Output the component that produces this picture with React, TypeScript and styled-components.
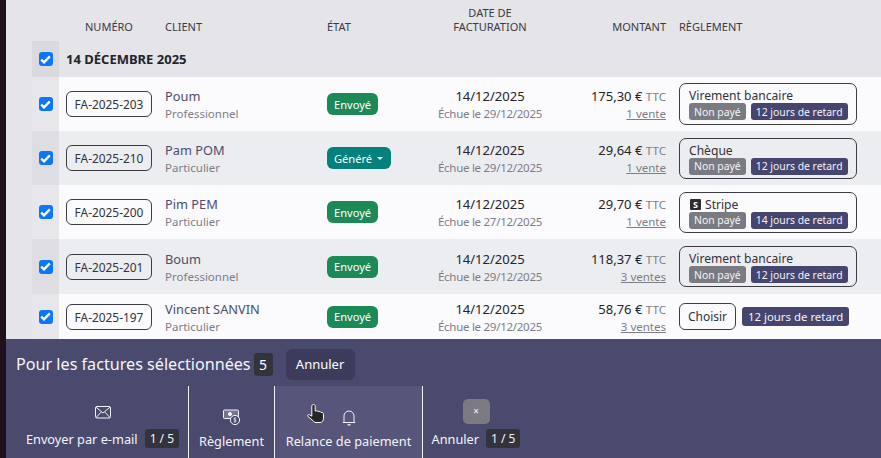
import React from "react";
import styled, { createGlobalStyle } from "styled-components";

const Global = createGlobalStyle`
  html, body { margin: 0; padding: 0; width: 881px; height: 458px; overflow: hidden; background: #e4e4e9; }
  body { font-family: "Noto Sans", "Open Sans", sans-serif; color: #2b2b33; }
  * { box-sizing: border-box; }
`;

const Page = styled.div`
  position: relative;
  width: 881px;
  height: 458px;
  display: flex;
  overflow: hidden;
`;
const Strip = styled.div`
  width: 6px;
  flex: none;
  background: #1f111b;
`;
const Main = styled.div`
  flex: 1;
  display: flex;
  flex-direction: column;
  min-width: 0;
`;
const Table = styled.div`
  padding-left: 26px;
  height: 339px;
  flex: none;
  background: #e4e4e9;
`;
const cols = `27px 106px 162px 110px 106px 123px 1fr`;
const HeadRow = styled.div`
  display: grid;
  grid-template-columns: ${cols};
  height: 41px;
  font-size: 11px;
  line-height: 14px;
  color: #3a3a44;
  text-transform: uppercase;
  align-items: start;
`;
const Head = styled.div<{ $align?: string; $pad?: number }>`
  padding-top: 20px;
  text-align: ${(p) => p.$align || "left"};
  padding-left: ${(p) => p.$pad || 0}px;
  white-space: nowrap;
`;
const DateHead = styled(Head)`
  padding-top: 6px;
`;
const GroupRow = styled.div`
  display: grid;
  grid-template-columns: 27px 1fr;
  height: 36px;
  align-items: stretch;
`;
const CheckCell = styled.div<{ $tone: string }>`
  background: ${(p) => p.$tone};
  display: flex;
  align-items: center;
  justify-content: center;
  align-self: stretch;
`;
const CheckBox = styled.span`
  width: 14px;
  height: 14px;
  border-radius: 3px;
  background: #0b76f7;
  display: flex;
  align-items: center;
  justify-content: center;
`;
const GroupTitle = styled.div`
  font-weight: 700;
  font-size: 13px;
  color: #23232b;
  display: flex;
  align-items: center;
  padding-left: 7px;
`;
const Row = styled.div<{ $alt: boolean; $h: number }>`
  display: grid;
  grid-template-columns: ${cols};
  height: ${(p) => p.$h}px;
  background: ${(p) => (p.$alt ? "#ecedf1" : "#fbfbfd")};
  align-items: center;
`;
const NumCell = styled.div`
  padding-left: 7px;
`;
const NumPill = styled.div`
  width: 86px;
  height: 26px;
  border: 1px solid #3c3c44;
  border-radius: 6px;
  display: flex;
  align-items: center;
  justify-content: center;
  font-size: 11.9px;
  color: #33333b;
  white-space: nowrap;
`;
const TextBlock = styled.div`
  padding-top: 2px;
`;
const ClientName = styled.div`
  font-size: 12.8px;
  line-height: 17px;
  color: #4d4c70;
  white-space: nowrap;
`;
const Sub = styled.div`
  font-size: 11.5px;
  line-height: 17px;
  color: #7d7d87;
  white-space: nowrap;
`;
const DueText = styled(Sub)`
  letter-spacing: -0.27px;
`;
const Status = styled.div<{ $bg: string }>`
  display: inline-flex;
  align-items: center;
  height: 22px;
  padding: 0 7px;
  border-radius: 6px;
  background: ${(p) => p.$bg};
  color: #fff;
  font-size: 11.1px;
  white-space: nowrap;
  gap: 5px;
  vertical-align: top;
`;
const Caret = styled.span`
  width: 0;
  height: 0;
  margin-right: 1px;
  border-left: 3px solid transparent;
  border-right: 3px solid transparent;
  border-top: 3px solid #fff;
`;
const DateCell = styled(TextBlock)`
  text-align: center;
`;
const DateText = styled.div`
  font-size: 13px;
  line-height: 17px;
  color: #23232b;
`;
const Amount = styled(TextBlock)`
  text-align: right;
`;
const Sum = styled.div`
  font-size: 13px;
  line-height: 17px;
  color: #23232b;
  white-space: nowrap;
`;
const Ttc = styled.span`
  font-size: 11.6px;
  color: #7d7d87;
`;
const Sales = styled.a`
  font-size: 11.5px;
  line-height: 17px;
  color: #7d7d87;
  text-decoration: underline;
  display: block;
`;
const PayCell = styled.div`
  padding-left: 13px;
  display: flex;
  align-items: center;
  gap: 6px;
`;
const PayBox = styled.div<{ $h: number }>`
  width: 178px;
  height: ${(p) => p.$h}px;
  border: 1px solid #3c3c44;
  border-radius: 7px;
  padding: 5px 8px 0 9px;
`;
const PayName = styled.div`
  display: flex;
  align-items: center;
  gap: 4px;
  font-size: 12.1px;
  line-height: 14px;
  color: #33333b;
  white-space: nowrap;
`;
const Badges = styled.div`
  display: flex;
  gap: 5px;
`;
const Tag = styled.span<{ $bg: string }>`
  background: ${(p) => p.$bg};
  color: #f4f4f8;
  height: 17px;
  display: inline-flex;
  align-items: center;
  padding: 0 5px;
  border-radius: 3px;
  font-size: 10.4px;
  white-space: nowrap;
`;
const StripeMark = styled.span`
  width: 11px;
  height: 11px;
  border-radius: 1px;
  background: #2d2d33;
  color: #fff;
  font-size: 9px;
  font-weight: 700;
  line-height: 11px;
  text-align: center;
  margin-left: 1px;
`;
const ChooseBtn = styled.div`
  width: 57px;
  height: 27px;
  border: 1px solid #3c3c44;
  border-radius: 6px;
  display: flex;
  align-items: center;
  justify-content: center;
  font-size: 12px;
  color: #33333b;
`;
const BigTag = styled(Tag)`
  height: 19px;
  padding: 0 6px;
  font-size: 11.4px;
`;
const Bar = styled.div`
  flex: 1;
  background: #4a496e;
  color: #fff;
  display: flex;
  flex-direction: column;
`;
const BarTop = styled.div`
  height: 47px;
  display: flex;
  align-items: center;
  padding: 3px 0 0 10px;
`;
const BarTitle = styled.div`
  font-size: 16.15px;
  color: #f6f6f8;
  white-space: nowrap;
`;
const Count = styled.span`
  background: #33333d;
  border-radius: 3px;
  color: #fff;
  height: 23px;
  width: 19px;
  margin-left: 3px;
  display: flex;
  align-items: center;
  justify-content: center;
  font-size: 14px;
`;
const CancelBtn = styled.div`
  margin-left: 13px;
  width: 69px;
  height: 31px;
  border-radius: 6px;
  background: #3c3b5c;
  display: flex;
  align-items: center;
  justify-content: center;
  font-size: 13px;
`;
const Actions = styled.div`
  flex: 1;
  display: flex;
  align-items: stretch;
`;
const Action = styled.div<{ $w: number; $top: number; $left?: number; $hover?: boolean; $border?: boolean }>`
  width: ${(p) => p.$w}px;
  flex: none;
  background: ${(p) => (p.$hover ? "#57567a" : "transparent")};
  border-right: ${(p) => (p.$border ? "1px solid #f2f2f6" : "none")};
  display: flex;
  flex-direction: column;
  align-items: center;
  padding-top: ${(p) => p.$top}px;
  padding-left: ${(p) => p.$left || 0}px;
`;
const IconSlot = styled.div<{ $h: number }>`
  height: ${(p) => p.$h}px;
  display: flex;
  align-items: center;
  justify-content: center;
`;
const ActionLabel = styled.div<{ $top: number }>`
  display: flex;
  align-items: center;
  gap: 7px;
  margin-top: ${(p) => p.$top}px;
  height: 19px;
  font-size: 12.75px;
  color: #f4f4f8;
  white-space: nowrap;
`;
const Ratio = styled.span`
  background: #33333d;
  border-radius: 3px;
  height: 19px;
  padding: 0 5px;
  display: inline-flex;
  align-items: center;
  font-size: 12px;
`;
const CloseIcon = styled.div`
  width: 27px;
  height: 25px;
  border-radius: 5px;
  background: #7b7a82;
  color: #f4f4f8;
  display: flex;
  align-items: center;
  justify-content: center;
  font-size: 10px;
`;
const Cursor = styled.svg`
  position: absolute;
  left: 306px;
  top: 403px;
`;

const Tick = () => (
  <svg width="11" height="9" viewBox="0 0 11 9" fill="none">
    <path d="M1.200 4.600 4 7.400 9.800 1.400" stroke="#fff" strokeWidth="2.300" />
  </svg>
);

type Inv = {
  num: string; name: string; kind: string; gen?: boolean; due: string; sum: string; sales: string;
  pay: string; stripe?: boolean; late: string; h: number; box: number; choose?: boolean;
};
const rows: Inv[] = [
  { num: "FA-2025-203", name: "Poum", kind: "Professionnel", due: "29/12/2025", sum: "175,30 €", sales: "1 vente", pay: "Virement bancaire", late: "12 jours de retard", h: 54, box: 42 },
  { num: "FA-2025-210", name: "Pam POM", kind: "Particulier", gen: true, due: "29/12/2025", sum: "29,64 €", sales: "1 vente", pay: "Chèque", late: "12 jours de retard", h: 54, box: 41 },
  { num: "FA-2025-200", name: "Pim PEM", kind: "Particulier", due: "27/12/2025", sum: "29,70 €", sales: "1 vente", pay: "Stripe", stripe: true, late: "14 jours de retard", h: 54, box: 41 },
  { num: "FA-2025-201", name: "Boum", kind: "Professionnel", due: "29/12/2025", sum: "118,37 €", sales: "3 ventes", pay: "Virement bancaire", late: "12 jours de retard", h: 55, box: 41 },
  { num: "FA-2025-197", name: "Vincent SANVIN", kind: "Particulier", due: "29/12/2025", sum: "58,76 €", sales: "3 ventes", pay: "", choose: true, late: "12 jours de retard", h: 45, box: 0 },
];

export default function App() {
  return (
    <Page>
      <Global />
      <Strip />
      <Main>
        <Table>
          <HeadRow>
            <div />
            <Head $pad={26}>Numéro</Head>
            <Head>Client</Head>
            <Head>État</Head>
            <DateHead $align="center">Date de<br />facturation</DateHead>
            <Head $align="right">Montant</Head>
            <Head $pad={13}>Règlement</Head>
          </HeadRow>
          <GroupRow>
            <CheckCell $tone="#dadade"><CheckBox><Tick /></CheckBox></CheckCell>
            <GroupTitle>14 DÉCEMBRE 2025</GroupTitle>
          </GroupRow>
          {rows.map((r, i) => (
            <Row key={r.num} $alt={i % 2 === 1} $h={r.h}>
              <CheckCell $tone={i % 2 === 1 ? "#dedee2" : "#e7e7eb"}>
                <CheckBox><Tick /></CheckBox>
              </CheckCell>
              <NumCell><NumPill>{r.num}</NumPill></NumCell>
              <TextBlock>
                <ClientName>{r.name}</ClientName>
                <Sub>{r.kind}</Sub>
              </TextBlock>
              <div>
                {r.gen ? (
                  <Status $bg="#04807d">Généré <Caret /></Status>
                ) : (
                  <Status $bg="#1c8a57">Envoyé</Status>
                )}
              </div>
              <DateCell>
                <DateText>14/12/2025</DateText>
                <DueText>Échue le {r.due}</DueText>
              </DateCell>
              <Amount>
                <Sum>{r.sum} <Ttc>TTC</Ttc></Sum>
                <Sales>{r.sales}</Sales>
              </Amount>
              <PayCell>
                {r.choose ? (
                  <>
                    <ChooseBtn>Choisir</ChooseBtn>
                    <BigTag $bg="#45456e">{r.late}</BigTag>
                  </>
                ) : (
                  <PayBox $h={r.box}>
                    <PayName>
                      {r.stripe && <StripeMark>S</StripeMark>}
                      {r.pay}
                    </PayName>
                    <Badges>
                      <Tag $bg="#7a7a82">Non payé</Tag>
                      <Tag $bg="#45456e">{r.late}</Tag>
                    </Badges>
                  </PayBox>
                )}
              </PayCell>
            </Row>
          ))}
        </Table>
        <Bar>
          <BarTop>
            <BarTitle>Pour les factures sélectionnées</BarTitle>
            <Count>5</Count>
            <CancelBtn>Annuler</CancelBtn>
          </BarTop>
          <Actions>
            <Action $w={183} $top={14} $left={11} $border>
              <IconSlot $h={25}>
                <svg width="16" height="13" viewBox="0 0 16 13" fill="none" stroke="#f4f4f8" strokeWidth="1">
                  <rect x="0.500" y="0.500" width="15" height="11.500" rx="1.500" />
                  <path d="M1 1.200 8 7l7-5.800M1 11.600l5-5.400M15 11.600l-5-5.400" />
                </svg>
              </IconSlot>
              <ActionLabel $top={4}>Envoyer par e-mail <Ratio>1 / 5</Ratio></ActionLabel>
            </Action>
            <Action $w={86} $top={17} $border>
              <IconSlot $h={28}>
                <svg width="18" height="17" viewBox="0 0 18 17" fill="none" stroke="#f4f4f8" strokeWidth="1">
                  <rect x="0.500" y="1" width="15" height="8.500" rx="1" fill="#f4f4f8" fillOpacity="0.25" />
                  <circle cx="7" cy="5" r="1.600" fill="#f4f4f8" />
                  <circle cx="12" cy="11" r="4.600" fill="#4a496e" />
                  <path d="M13.200 9.400c-.5-.6-2.400-.7-2.400.5 0 1.200 2.500.8 2.500 2 0 1.200-2 1.100-2.600.4M12 8.400v5.200" strokeWidth="0.700" />
                </svg>
              </IconSlot>
              <ActionLabel $top={0}>Règlement</ActionLabel>
            </Action>
            <Action $w={148} $top={17} $hover $border>
              <IconSlot $h={28}>
                <svg width="14" height="17" viewBox="0 0 14 17" fill="none" stroke="#f4f4f8" strokeWidth="1">
                  <path d="M2 12.500V7a5 5 0 0 1 10 0v5.500l1 1H1z" />
                  <path d="M5.500 15.800h3" strokeWidth="1.300" />
                </svg>
              </IconSlot>
              <ActionLabel $top={0}>Relance de paiement</ActionLabel>
            </Action>
            <Action $w={106} $top={12}>
              <IconSlot $h={26}><CloseIcon>×</CloseIcon></IconSlot>
              <ActionLabel $top={5}>Annuler <Ratio>1 / 5</Ratio></ActionLabel>
            </Action>
          </Actions>
        </Bar>
      </Main>
      <Cursor width="20" height="22" viewBox="0 0 20 22">
        <path
          d="M7.500 1.500c1.100 0 1.700.8 1.700 1.800v4.700c1.400-.3 2.500-.1 3 .6 1.300-.3 2.300 0 2.800.8 1.400-.2 2.500.5 2.500 1.800v4.100c0 2.500-1.400 4.200-3.500 4.200H10c-1.500 0-2.400-.9-3.200-2L2 13.500c-.8-1 .2-2.300 1.300-1.800l2.500 1.500V3.300c0-1 .7-1.800 1.700-1.800z"
          fill="#262626" stroke="#fff" strokeWidth="1"
        />
      </Cursor>
    </Page>
  );
}
